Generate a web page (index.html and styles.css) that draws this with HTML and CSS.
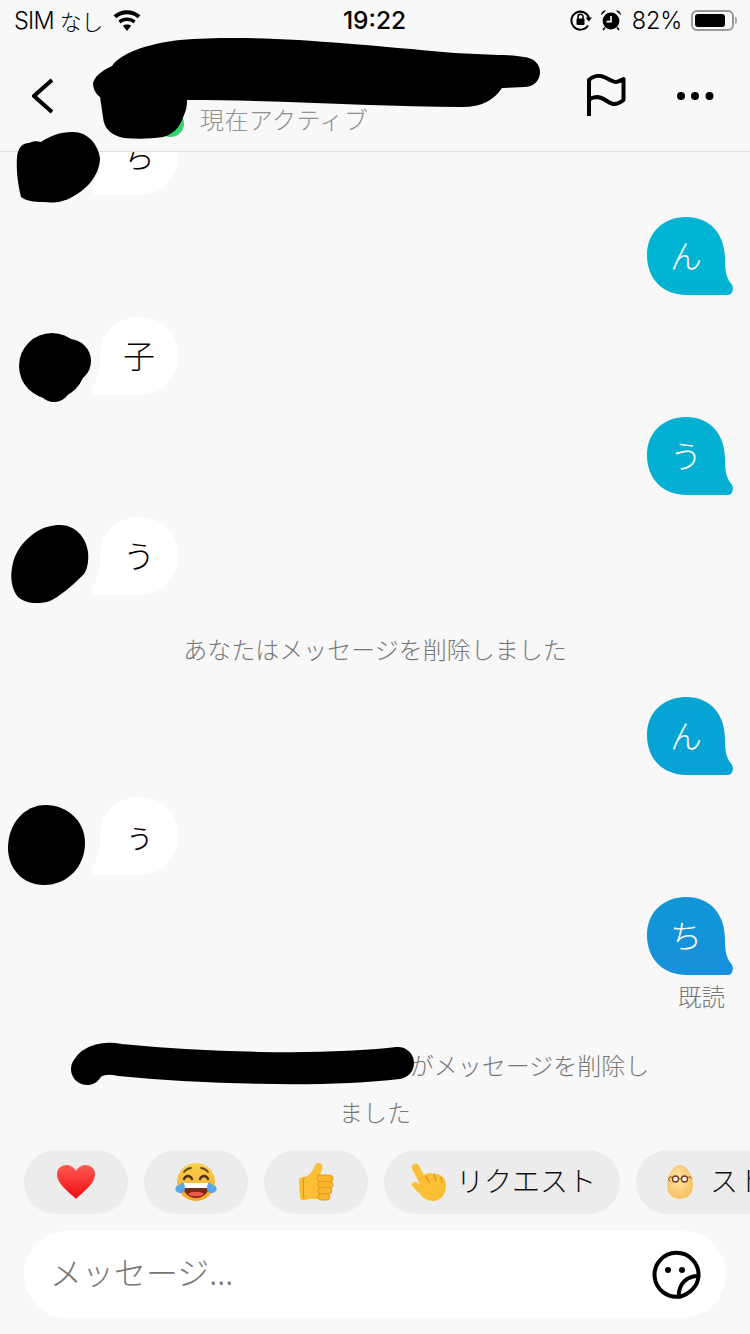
FILE: index.html
```html
<!DOCTYPE html>
<html lang="ja">
<head>
<meta charset="utf-8">
<title>メッセージ</title>
<link rel="stylesheet" href="styles.css">
</head>
<body>
<div class="app">
  <div class="status">
    <div class="status-left">
      <span class="sim">SIM</span><span class="nasi">なし</span>
      <svg class="wifi" width="32" height="23" viewBox="0 0 32 24"><path d="M16 23 11.600 17.600C14 15.600 18 15.600 20.400 17.600Z"/><path d="M9.400 15C13 11.800 19 11.800 22.600 15L25 12.200C20 7.600 12 7.600 7 12.200Z"/><path d="M4.900 9.600C10.800 4 21.200 4 27.100 9.600L30 6.600C22.400-.6 9.600-.6 2 6.600Z"/></svg>
    </div>
    <div class="status-time">19:22</div>
    <div class="status-right">
      <svg class="st-lock" width="22" height="22" viewBox="0 0 22 22"><path class="st-line" d="M18 16.500A9 9 0 1 1 19 9"/><path d="M15.500 8.500H22L18.900 12.500Z"/><rect x="6.500" y="9.500" width="8" height="6.500" rx="1"/><path class="st-thin" d="M8 10V7.800a2.500 2.500 0 0 1 5 0V10"/></svg>
      <svg class="st-alarm" width="22" height="22" viewBox="0 0 22 22"><circle cx="11" cy="12" r="8.400"/><path d="M1 6.200C1 3 3.600 1 6.200 1.600ZM21 6.200C21 3 18.400 1 15.800 1.600Z"/><path class="st-white" d="M11 7V12.600H6.500"/><path class="st-thin" d="M5 18.500 3 21M17 18.500 19 21"/></svg>
      <span class="st-pct">82%</span>
      <div class="battery"><div class="battery-fill"></div></div>
      <div class="battery-nub"></div>
    </div>
  </div>

  <header class="header">
    <svg class="back" width="24" height="36" viewBox="0 0 24 36"><path d="M20 2 2 18 20 34"/></svg>
    <div class="head-avatar"><span class="online"></span></div>
    <div class="active">現在アクティブ</div>
    <div class="head-space"></div>
    <svg class="flag" width="42" height="44" viewBox="0 0 42 44"><path d="M4 42V6C8 2 14 1 19 3 24 5 28 8 31 8 34 8 36 6.500 38.500 5V26C36 28 33 30 29 30 24 30 20 24 13 23 9 23 6 24 4 26"/></svg>
    <svg class="dots" width="40" height="10" viewBox="0 0 40 10"><circle cx="6" cy="5" r="4"/><circle cx="20" cy="5" r="4"/><circle cx="34.500" cy="5" r="4"/></svg>
  </header>

  <main class="messages">
    <div class="row row-in"><div class="bubble bubble-in">ち</div></div>
    <div class="row row-out"><div class="bubble bubble-out">ん</div></div>
    <div class="row row-in"><div class="bubble bubble-in">子</div></div>
    <div class="row row-out"><div class="bubble bubble-out">う</div></div>
    <div class="row row-in"><div class="bubble bubble-in">う</div></div>
    <div class="notice notice-first">あなたはメッセージを削除しました</div>
    <div class="row row-out row-after-notice"><div class="bubble bubble-out">ん</div></div>
    <div class="row row-in"><div class="bubble bubble-in">ぅ</div></div>
    <div class="row row-out"><div class="bubble bubble-out">ち</div></div>
    <div class="read">既読</div>
    <div class="notice notice-last"><span class="hidden-name"></span>がメッセージを削除し<br>ました</div>
  </main>

  <div class="chips">
    <div class="chip chip-icon">
      <svg width="40" height="36" viewBox="0 0 40 36"><defs><linearGradient id="hg" x1="0" y1="0" x2="0" y2="1"><stop offset="0" stop-color="#ff5a52"/><stop offset="1" stop-color="#ee0a10"/></linearGradient></defs><path fill="url(#hg)" d="M20 35C14 29 1 20 1 10.500 1 4.500 5.500 1 10.500 1 14.500 1 18 3.500 20 7 22 3.500 25.500 1 29.500 1 34.500 1 39 4.500 39 10.500 39 20 26 29 20 35Z"/></svg>
    </div>
    <div class="chip chip-icon">
      <svg width="42" height="40" viewBox="0 0 42 40"><defs><linearGradient id="fg" x1="0" y1="0" x2="0" y2="1"><stop offset="0" stop-color="#fcd04f"/><stop offset="1" stop-color="#f5a623"/></linearGradient></defs><circle cx="21" cy="20" r="19" fill="url(#fg)"/><path fill="none" stroke="#6b4a1c" stroke-width="1.800" stroke-linecap="round" d="M9 10C11 7 13 6.500 16 6M33 10C31 7 29 6.500 26 6"/><path fill="none" stroke="#4a3216" stroke-width="2.400" stroke-linecap="round" d="M9 17C11 13 15 13 17 17M25 17C27 13 31 13 33 17"/><path fill="#7a2b1a" d="M7 21H35C35 30 28 36 21 36 14 36 7 30 7 21Z"/><path fill="#fff" d="M7 21H35C35 23 34.600 25 34 26H8C7.400 25 7 23 7 21Z"/><path fill="#ee5a4a" d="M13 32C16 29 26 29 29 32 26 35 16 35 13 32Z"/><path fill="#5aa7e8" d="M8 20C11 24 11 31 6 31 0 31-1 26 2 24 4 23 6 22 8 20ZM34 20C31 24 31 31 36 31 42 31 43 26 40 24 38 23 36 22 34 20Z"/></svg>
    </div>
    <div class="chip chip-icon">
      <svg width="36" height="38" viewBox="0 0 36 38"><path fill="#fbbf35" d="M1 17C1 15 3 14 6 14 11 13 14 9 16 5 17 2 18 0 21 0 24 0 25 3 24 7L22 12H28V36H12C8 37 3 38 2 35Z"/><g fill="#f9b52c" stroke="#e08f1a" stroke-width=".8"><rect x="19" y="12" width="16" height="7" rx="3.500"/><rect x="20" y="18.500" width="15" height="6.500" rx="3.250"/><rect x="20" y="24.500" width="14" height="6.500" rx="3.250"/><rect x="20" y="30.500" width="12" height="6.500" rx="3.250"/></g><path fill="none" stroke="#e08f1a" stroke-width="1" d="M6 14C5 20 5 30 6 36"/></svg>
    </div>
    <div class="chip chip-text">
      <svg class="chip-hand" width="36" height="38" viewBox="0 0 36 38"><path fill="#fbbf35" d="M1 3C3 0 7 0 8 3L13 12C16 10 20 9 23 11 27 10 30 12 31 14 34 15 35 19 35 23 35 32 29 38 22 38 16 38 12 35 9 31L2 24C0 22 1 19 4 19 6 19 8 21 9 22L5 13C3 9 0 6 1 3Z"/><path fill="none" stroke="#e08f1a" stroke-width="1.200" stroke-linecap="round" d="M15 13 18 19M23 11 25 18M30 14 31 19"/></svg>
      <span class="chip-label">リクエスト</span>
    </div>
    <div class="chip chip-text chip-story">
      <svg class="chip-egg" width="26" height="34" viewBox="0 0 26 34"><defs><radialGradient id="eg" cx=".45" cy=".4" r=".7"><stop offset="0" stop-color="#fde6a8"/><stop offset="1" stop-color="#f7ba55"/></radialGradient></defs><path fill="url(#eg)" d="M13 0C20 0 26 11 26 20 26 29 20 34 13 34 6 34 0 29 0 20 0 11 6 0 13 0Z"/><g fill="#fff" stroke="#7a3a10" stroke-width="1.400"><circle cx="8.500" cy="14" r="3"/><circle cx="17.500" cy="14" r="3"/></g><path fill="none" stroke="#a3501c" stroke-width="1" d="M11.500 13.500H14.500M5.500 13 3 11.500 1.500 14 3 16.500M20.500 13 23 11.500 24.500 14"/></svg>
      <span class="chip-label">ストーリー</span>
    </div>
  </div>

  <div class="composer">
    <span class="placeholder">メッセージ...</span>
    <svg class="sticker" width="52" height="52" viewBox="0 0 52 52"><path d="M29 47.500A22 22 0 1 1 47.500 27C36 27 28 34 27.500 47.600"/><path d="M47.500 27C47 37 39 45 28 48"/><circle class="eye" cx="17" cy="21" r="3"/><circle class="eye" cx="31" cy="21" r="3"/></svg>
  </div>

  <svg class="redactions" width="750" height="1334" viewBox="0 0 750 1334" aria-hidden="true">
    <path d="M93 83C96 74 104 70 112 66 120 54 145 44 180 40 260 34 340 43 455 53L498 55C510 55 518 56 524 57 534 58 540 64 540 72 540 81 533 87 524 87L502 88C494 100 482 107 462 107 380 107 280 100 187 100 187 106 186 111 184 115 180 128 172 135 163 137 150 139 136 139 124 138 110 135 104 128 103 117L100 97C96 94 93 89 93 83Z"/>
    <path d="M72 132C86 131 98 143 100 158 100 172 90 188 72 197 62 203 52 203 43 202 34 202 26 201 21 197 18 185 16 170 17 157 18 148 22 143 29 143 33 141 37 141 41 142 50 136 60 132 72 132Z"/>
    <circle cx="52" cy="366" r="33"/><circle cx="69" cy="361" r="22"/><circle cx="54" cy="385" r="17"/>
    <path d="M60 525C74 525 86 536 88 552 89 562 87 572 82 576 72 586 60 596 50 601 38 605 24 603 18 597 12 590 10 578 12 568 14 552 24 540 36 532 44 527 52 525 60 525Z"/>
    <path d="M46 805C66 805 85 820 85 843 85 866 68 885 44 885 22 885 8 868 8 848 8 824 24 805 46 805Z"/>
    <path class="stroke" d="M87 1069C92 1060 105 1057 120 1060 200 1068 320 1072 398 1063"/>
  </svg>
</div>
</body>
</html>
```

FILE: styles.css
```css
* { box-sizing: border-box; }
html, body { margin: 0; padding: 0; }
body {
  width: 750px;
  height: 1334px;
  overflow: hidden;
  background: #f8f8f8;
  font-family: "Noto Sans CJK JP", "Noto Sans", sans-serif;
  font-weight: 300;
  color: #111;
}
.app {
  position: relative;
  width: 750px;
  height: 1334px;
  display: flex;
  flex-direction: column;
  overflow: hidden;
  background: #f8f8f8;
}

/* status bar */
.status {
  flex: none;
  height: 40px;
  padding: 0 13px 0 14px;
  display: grid;
  grid-template-columns: 1fr auto 1fr;
  align-items: center;
  font-family: Inter, "Noto Sans CJK JP", sans-serif;
  font-size: 24px;
  font-weight: 400;
  color: #000;
}
.status-left { display: flex; align-items: center; }
.sim { font-size: 23.500px; letter-spacing: -.8px; font-weight: 300; }
.nasi { margin-left: 6px; font-size: 22px; letter-spacing: -.5px; font-weight: 300; }
.wifi { margin-left: 8px; fill: #000; }
.status-time { font-weight: 500; font-size: 24.500px; margin-left: -2px; }
.status-right { display: flex; align-items: center; justify-content: flex-end; }
.st-lock { fill: #000; }
.st-line { fill: none; stroke: #000; stroke-width: 2; }
.st-thin { fill: none; stroke: #000; stroke-width: 1.600; }
.st-white { fill: none; stroke: #fff; stroke-width: 1.600; }
.st-alarm { margin-left: 8px; fill: #000; }
.st-pct { margin-left: 10px; font-size: 23.500px; font-weight: 300; letter-spacing: -.2px; }
.battery {
  margin-left: 9px;
  width: 43px;
  height: 21px;
  border: 2px solid #999;
  border-radius: 6px;
  padding: 2px;
}
.battery-fill { width: 30px; height: 100%; background: #000; border-radius: 3px; }
.battery-nub { width: 2px; height: 7px; margin-left: 1px; background: #aaa; border-radius: 0 2px 2px 0; }

/* header */
.header {
  flex: none;
  height: 112px;
  border-bottom: 1px solid #dcdcdc;
  padding: 0 35px 0 32px;
  display: flex;
  align-items: center;
}
.back { fill: none; stroke: #000; stroke-width: 4; }
.head-avatar { position: relative; width: 144px; align-self: stretch; }
.online {
  position: absolute;
  left: 101px;
  top: 70px;
  width: 27px;
  height: 27px;
  border-radius: 50%;
  background: #2fd66b;
}
.active {
  align-self: flex-end;
  padding-bottom: 15px;
  font-size: 24px;
  letter-spacing: .4px;
  line-height: 34px;
  color: #909090;
}
.head-space { flex: 1; }
.flag { fill: none; stroke: #000; stroke-width: 4; stroke-linejoin: round; }
.dots { margin-left: 48px; fill: #000; }

/* messages */
.messages {
  flex: 1;
  min-height: 0;
  overflow: hidden;
  display: flex;
  flex-direction: column;
  justify-content: flex-end;
  padding-bottom: 15px;
}
.row { flex: none; display: flex; margin-top: 22px; }
.row-in { padding-left: 92px; }
.row-out { justify-content: flex-end; padding-right: 17px; }
.row-after-notice { margin-top: 25px; }
.bubble {
  width: 86px;
  height: 78px;
  display: flex;
  align-items: center;
  font-size: 32px;
  line-height: 1;
}
.bubble-out {
  justify-content: center;
  padding: 0 8px 4px 0;
  color: #fff;
  background: linear-gradient(180deg, #00b5d3 200px, #03aed2 500px, #06a2d4 760px, #188edb 1000px) fixed;
  clip-path: path("M39 0C64 0 78 18 78 42 78 52 78.500 60 84 66.500 87.500 70 86 78 81 78L40 78C16 78 0 62 0 38 0 15 17 0 39 0Z");
}
.bubble-in {
  justify-content: center;
  padding: 0 0 4px 8px;
  color: #000;
  background: #fff;
  clip-path: path("M47 0C22 0 8 18 8 42 8 52 7.500 60 2 66.500-1.500 70 0 78 5 78L46 78C70 78 86 62 86 38 86 15 69 0 47 0Z");
}
.notice {
  flex: none;
  font-size: 24px;
  line-height: 47px;
  color: #777;
  text-align: center;
}
.notice-first { margin-top: 30px; }
.notice-last { margin-top: 28px; }
.hidden-name { display: inline-block; width: 309px; height: 1px; }
.read {
  flex: none;
  margin-top: 4px;
  padding-right: 25px;
  font-size: 23.500px;
  line-height: 34px;
  color: #777;
  text-align: right;
}

/* quick chips */
.chips {
  flex: none;
  height: 64px;
  padding-left: 24px;
  display: flex;
  gap: 16px;
}
.chip {
  flex: none;
  height: 64px;
  border-radius: 32px;
  background: #ececec;
  display: flex;
  align-items: center;
}
.chip-icon { width: 104px; justify-content: center; }
.chip-text { font-size: 28px; color: #111; white-space: nowrap; }
.chip-hand { flex: none; margin: 0 9px 0 27px; }
.chip-label { padding: 0 24px 4px 0; }
.chip-egg { flex: none; margin: 0 17px 0 31px; }
.chip-story { width: 220px; overflow: hidden; }

/* composer */
.composer {
  flex: none;
  height: 87px;
  margin: 17px 24px 16px;
  padding: 0 23px 0 26px;
  border-radius: 44px;
  background: #fff;
  display: flex;
  align-items: center;
  justify-content: space-between;
}
.placeholder { font-size: 32px; color: #777; padding-bottom: 8px; }
.sticker { fill: none; stroke: #000; stroke-width: 4; stroke-linejoin: round; }
.eye { fill: #000; stroke: none; }

/* hand-drawn redactions lying over the screen */
.redactions {
  position: absolute;
  left: 0;
  top: 0;
  fill: #000;
  pointer-events: none;
}
.stroke { fill: none; stroke: #000; stroke-width: 32; stroke-linecap: round; }
```
